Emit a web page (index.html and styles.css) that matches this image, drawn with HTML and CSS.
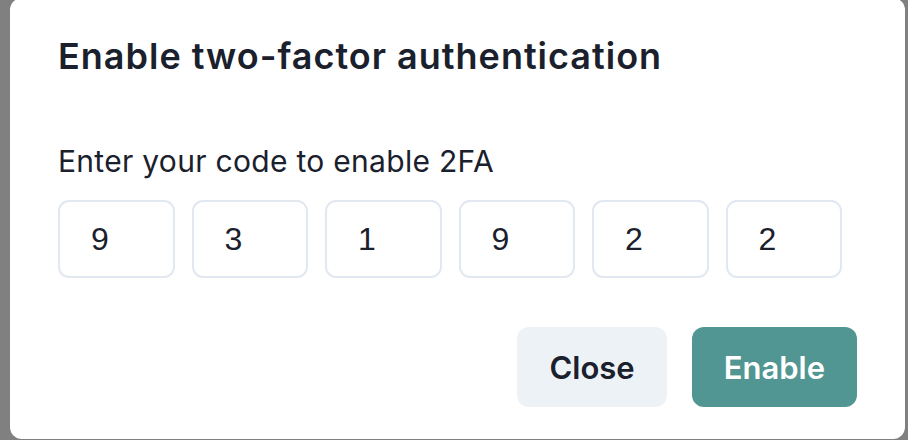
FILE: index.html
```html
<!DOCTYPE html>
<html lang="en">
<head>
<meta charset="utf-8">
<title>Enable two-factor authentication</title>
<link rel="stylesheet" href="styles.css">
</head>
<body>
<div class="overlay">
  <section class="modal" role="dialog" aria-labelledby="modal-title">
    <header class="modal-header">
      <h2 id="modal-title" class="modal-title">Enable two-factor authentication</h2>
    </header>
    <div class="modal-body">
      <p class="modal-text">Enter your code to enable 2FA</p>
      <div class="pin-group">
        <input class="pin" type="text" value="9" maxlength="1">
        <input class="pin" type="text" value="3" maxlength="1">
        <input class="pin" type="text" value="1" maxlength="1">
        <input class="pin" type="text" value="9" maxlength="1">
        <input class="pin" type="text" value="2" maxlength="1">
        <input class="pin" type="text" value="2" maxlength="1">
      </div>
    </div>
    <footer class="modal-footer">
      <button class="btn btn-secondary" type="button">Close</button>
      <button class="btn btn-primary" type="button">Enable</button>
    </footer>
  </section>
</div>
</body>
</html>
```
FILE: styles.css
```css
* {
  box-sizing: border-box;
}

html, body {
  margin: 0;
  padding: 0;
  height: 100%;
}

body {
  background: #808080;
  font-family: Inter, "Noto Sans", sans-serif;
  color: #1a202c;
  overflow: hidden;
}

.overlay {
  padding-left: 10px;
}

.modal {
  width: 895px;
  height: 441px;
  margin-top: -2px;
  background: #ffffff;
  border-radius: 12px;
  display: flex;
  flex-direction: column;
}

.modal-header {
  padding: 34px 48px 0;
}

.modal-title {
  margin: 0;
  font-size: 36px;
  line-height: 48px;
  font-weight: 600;
  letter-spacing: 1px;
  color: #1a202c;
}

.modal-body {
  padding: 61px 48px 0;
}

.modal-text {
  margin: 0;
  font-size: 30px;
  line-height: 40px;
  font-weight: 400;
  letter-spacing: 0.3px;
  color: #1a202c;
}

.pin-group {
  margin-top: 19px;
  display: flex;
  gap: 17px;
}

.pin {
  width: 116.5px;
  height: 78px;
  margin: 0;
  padding: 0 0 0 31px;
  border: 2px solid #e2e8f0;
  border-radius: 11px;
  background: #ffffff;
  font-family: "Liberation Sans", Arial, sans-serif;
  font-size: 32px;
  color: #1a202c;
  outline: none;
}

.modal-footer {
  margin-top: 49px;
  padding: 0 48px 32px;
  display: flex;
  justify-content: flex-end;
  gap: 25px;
}

.btn {
  height: 80px;
  padding: 0 32px;
  border: none;
  border-radius: 12px;
  font-family: Inter, "Noto Sans", sans-serif;
  font-size: 31px;
  font-weight: 600;
  cursor: pointer;
}

.btn-secondary {
  background: #edf2f7;
  color: #1a202c;
}

.btn-primary {
  background: #519692;
  color: #ffffff;
}
```
